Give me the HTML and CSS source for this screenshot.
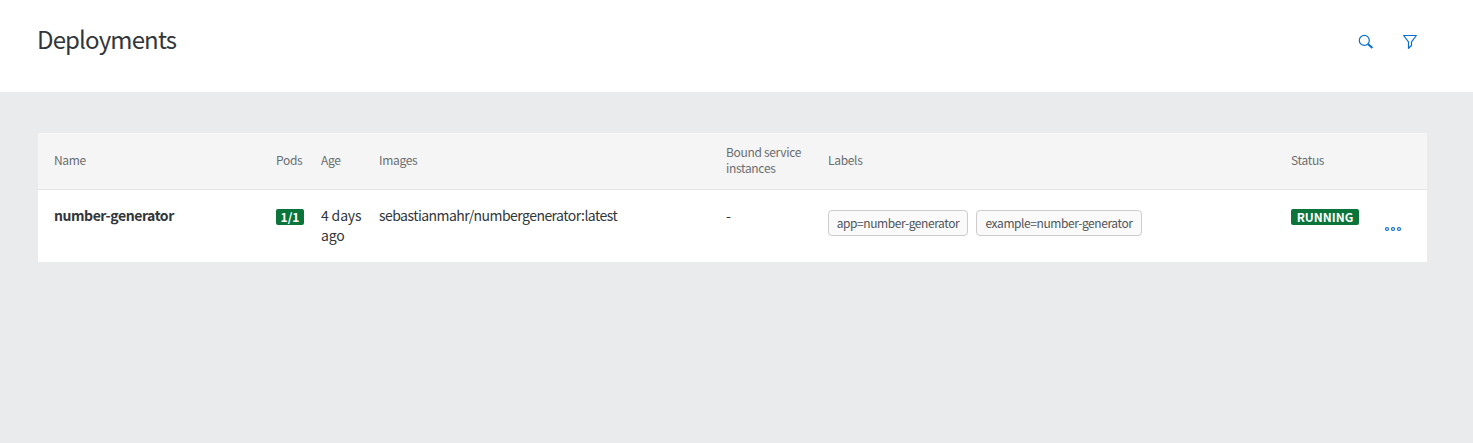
FILE: index.html
```html
<!DOCTYPE html>
<html lang="en">
<head>
<meta charset="utf-8">
<title>Deployments</title>
<link rel="stylesheet" href="styles.css">
</head>
<body>
<header class="page-header">
  <h1 class="page-title">Deployments</h1>
  <div class="toolbar">
    <button class="icon-button" aria-label="Search">
      <svg width="16" height="16" viewBox="0 0 16 16" fill="none" stroke="currentColor"><circle cx="6.3" cy="6.4" r="5" stroke-width="1.2"/><path d="M9.9 10l4.5 4.1" stroke-width="2"/></svg>
    </button>
    <button class="icon-button" aria-label="Filter">
      <svg width="16" height="16" viewBox="0 0 16 16" fill="none" stroke="currentColor" stroke-width="1.2" stroke-linejoin="round"><path d="M1.6 1.5h12.8L9.5 7.8v3.7L6.5 14.3V7.8z"/></svg>
    </button>
  </div>
</header>
<main class="content">
  <div class="table" role="table">
    <div class="row row-head" role="row">
      <span class="th">Name</span>
      <span class="th">Pods</span>
      <span class="th">Age</span>
      <span class="th">Images</span>
      <span class="th th-bound">Bound service instances</span>
      <span class="th">Labels</span>
      <span class="th">Status</span>
      <span class="th"></span>
    </div>
    <div class="row row-body" role="row">
      <div class="td name">number-generator</div>
      <div class="td"><span class="badge badge-pods">1/1</span></div>
      <div class="td age">4 days ago</div>
      <div class="td image">sebastianmahr/numbergenerator:latest</div>
      <div class="td">-</div>
      <div class="labels"><span class="label label-app">app=number-generator</span><span class="label label-example">example=number-generator</span></div>
      <div class="td"><span class="badge badge-status">RUNNING</span></div>
      <button class="more" aria-label="Actions">
        <svg width="18" height="6" viewBox="0 0 18 6" fill="#d5e7f8" stroke="currentColor" stroke-width="1.1"><circle cx="3" cy="3" r="1.5"/><circle cx="9" cy="3" r="1.5"/><circle cx="15" cy="3" r="1.5"/></svg>
      </button>
    </div>
  </div>
</main>
</body>
</html>
```
FILE: styles.css
```css
* { box-sizing: border-box; }
body {
  margin: 0;
  min-height: 443px;
  background: #eaebed;
  color: #32363a;
  font-family: "Noto Sans CJK SC", "Noto Sans", sans-serif;
}
button {
  padding: 0;
  border: 0;
  background: none;
  color: #0a6ed1;
}
svg { display: block; }
.page-header {
  display: flex;
  justify-content: space-between;
  height: 92px;
  padding: 23px 55px 0 37px;
  background: #fff;
}
.page-title {
  margin: 0;
  font-size: 24px;
  font-weight: 400;
  letter-spacing: -0.86px;
  line-height: 32px;
}
.toolbar {
  display: flex;
  gap: 28px;
  padding-top: 11px;
}
.icon-button { width: 16px; height: 16px; }
.content { padding: 41px 46px 0 38px; }
.table { background: #fff; }
.row {
  display: grid;
  grid-template-columns: 222px 45px 58px 347px 102px 463px 94px 1fr;
  padding-left: 16px;
}
.row-head {
  height: 57px;
  padding-bottom: 2px;
  align-items: center;
  background: #f5f5f5;
  border-bottom: 1px solid #e4e4e4;
}
.th {
  color: #6a6d70;
  font-size: 12px;
  letter-spacing: -0.32px;
  line-height: 16px;
}
.th-bound { width: 85px; }
.row-body {
  height: 72px;
  padding-top: 15px;
  align-items: start;
}
.td {
  font-size: 14px;
  line-height: 20px;
}
.name {
  font-weight: 700;
  letter-spacing: -0.44px;
}
.age {
  width: 45px;
  letter-spacing: -0.15px;
}
.image { letter-spacing: -0.54px; }
.badge {
  display: block;
  width: max-content;
  height: 16px;
  margin-top: 4px;
  border-radius: 2px;
  background: #0b743a;
  color: #fff;
  font-size: 12px;
  font-weight: 700;
  line-height: 16px;
  text-align: center;
}
.badge-pods { width: 28px; }
.badge-status { width: 68px; }
.labels {
  display: flex;
  gap: 8px;
  padding-top: 5px;
}
.label {
  height: 26px;
  border: 1px solid #ccc;
  border-radius: 4px;
  background: #fafafa;
  color: #51555a;
  font-size: 12px;
  letter-spacing: -0.42px;
  line-height: 23px;
  text-align: center;
  white-space: nowrap;
}
.label-app { width: 140px; }
.label-example { width: 166px; }
.more { width: 18px; margin-top: 21px; margin-left: -1px; }
```
